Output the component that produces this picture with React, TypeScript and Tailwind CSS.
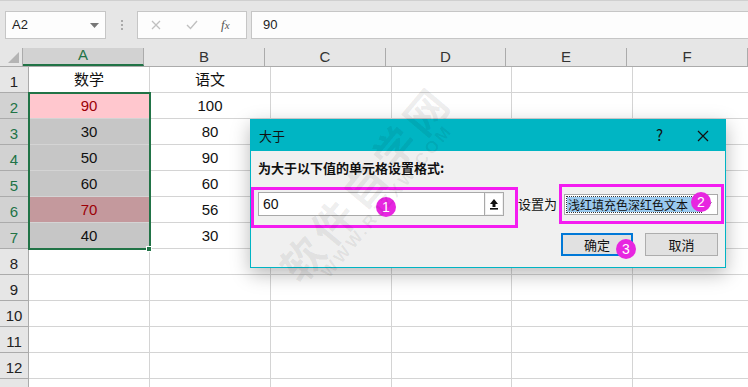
import React from 'react';

const cols = ['A', 'B', 'C', 'D', 'E', 'F'];
const colW = [121, 121, 121, 120, 121, 121];

type Cell = { v?: string; bg?: string; color?: string };

const data: Record<number, Cell[]> = {
  1: [{ v: '数学' }, { v: '语文' }],
  2: [{ v: '90', bg: '#ffc7ce', color: '#9c0006' }, { v: '100' }],
  3: [{ v: '30', bg: '#c6c6c6' }, { v: '80' }],
  4: [{ v: '50', bg: '#c6c6c6' }, { v: '90' }],
  5: [{ v: '60', bg: '#c6c6c6' }, { v: '60' }],
  6: [{ v: '70', bg: '#c4999d', color: '#9c0006' }, { v: '56' }],
  7: [{ v: '40', bg: '#c6c6c6' }, { v: '30' }],
};

const font = { fontFamily: '"Liberation Sans", "Noto Sans CJK SC", sans-serif' };

const Badge = ({ n, className }: { n: string; className: string }) => (
  <div
    className={`absolute w-[20px] h-[20px] rounded-full bg-[#e726e0] text-white text-[14px] leading-[20px] text-center ${className}`}
    style={font}
  >
    {n}
  </div>
);

const Toolbar = () => (
  <div className="h-[48px] bg-[#e6e6e6] border-t border-[#d0d0d0] flex items-start pt-[10px] pl-[5px]">
    <div className="w-[101px] h-[28px] bg-[#fdfdfd] border border-[#c6c6c6] flex items-center justify-between pl-[6px] pr-[6px]">
      <span className="text-[13px] text-[#222]">A2</span>
      <svg width="9" height="5" viewBox="0 0 9 5">
        <path d="M0 0h9L4.5 5z" fill="#777" />
      </svg>
    </div>
    <div className="w-[31px] h-[28px] flex flex-col items-center justify-center gap-[2px]">
      <span className="w-[2px] h-[2px] bg-[#aaa]" />
      <span className="w-[2px] h-[2px] bg-[#aaa]" />
      <span className="w-[2px] h-[2px] bg-[#aaa]" />
    </div>
    <div className="w-[110px] h-[28px] bg-[#fdfdfd] border border-[#c6c6c6] flex items-center">
      <svg className="ml-[13px]" width="10" height="10" viewBox="0 0 10 10">
        <path d="M1 1l8 8M9 1L1 9" stroke="#c0c0c0" strokeWidth="1.3" />
      </svg>
      <svg className="ml-[25px]" width="12" height="10" viewBox="0 0 12 10">
        <path d="M1 5l3.5 3.5L11 1" stroke="#c0c0c0" strokeWidth="1.4" fill="none" />
      </svg>
      <span className="ml-[23px] text-[13px] italic text-[#555]" style={{ fontFamily: '"Liberation Serif", serif' }}>
        f<span className="text-[11px]">x</span>
      </span>
    </div>
    <div className="ml-[4px] flex-1 h-[28px] bg-[#fdfdfd] border-y border-l border-[#c6c6c6] flex items-center pl-[11px]">
      <span className="text-[13px] text-[#222]">90</span>
    </div>
  </div>
);

const Sheet = () => {
  const rows = Array.from({ length: 13 }, (_, i) => i + 1);
  return (
    <div className="relative">
      <div className="flex h-[19px] bg-[#e6e6e6] border-b border-[#ababab]">
        <div className="w-[29px] border-r border-[#ababab] relative">
          <svg className="absolute right-[3px] bottom-[3px]" width="11" height="11" viewBox="0 0 11 11">
            <path d="M11 0v11H0z" fill="#b4b4b4" />
          </svg>
        </div>
        {cols.map((c, i) => (
          <div
            key={c}
            style={{ width: colW[i] }}
            className={`shrink-0 flex items-end justify-center text-[15px] leading-[18px] ${
              c === 'A'
                ? 'bg-[#d2d2d2] text-[#217346] border-b-2 border-[#217346] border-r border-r-[#ababab]'
                : 'text-[#333] border-r border-[#ababab]'
            }`}
          >
            {c}
          </div>
        ))}
      </div>
      {rows.map((r) => {
        const sel = r >= 2 && r <= 7;
        return (
          <div key={r} className="flex h-[26px]">
            <div
              className={`w-[29px] shrink-0 border-r border-b border-[#ababab] text-[15px] leading-[25px] text-center pt-[2px] ${
                sel ? 'bg-[#d2d2d2] text-[#217346]' : 'bg-[#e6e6e6] text-[#222]'
              }`}
            >
              {r}
            </div>
            {cols.map((c, i) => {
              const cell = data[r]?.[i];
              return (
                <div
                  key={c}
                  style={{ width: colW[i], background: cell?.bg, color: cell?.color ?? '#111' }}
                  className="shrink-0 border-r border-b border-[#d4d4d4] text-[15px] leading-[25px] text-center"
                >
                  {cell?.v}
                </div>
              );
            })}
          </div>
        );
      })}
      {/* selection A2:A7 */}
      <div className="absolute left-[28px] top-[44px] w-[123px] h-[158px] border-2 border-[#217346] pointer-events-none" />
      <div className="absolute left-[146px] top-[198px] w-[6px] h-[6px] bg-[#217346] border border-white" />
    </div>
  );
};

const Dialog = () => (
  <div
    className="absolute left-[250px] top-[119px] w-[476px] h-[149px] border border-[#00b4c4] bg-[#f0f0f0] shadow-[0_6px_18px_rgba(0,0,0,0.28)]"
    style={{ fontFamily: '"Noto Sans CJK SC", sans-serif' }}
  >
    <div className="h-[31px] bg-[#00b5c3] flex items-center pl-[8px] pr-[16px] text-[13px] text-[#111]">
      <span className="flex-1">大于</span>
      <span className="mr-[34px] text-[15px]">?</span>
      <svg width="12" height="12" viewBox="0 0 12 12">
        <path d="M1 1l10 10M11 1L1 11" stroke="#111" strokeWidth="1.2" />
      </svg>
    </div>
    <div className="relative px-[7px]">
      <div className="pt-[9px] text-[13px] font-bold text-[#111] leading-[16px]">为大于以下值的单元格设置格式:</div>
      <div className="mt-[16px] flex items-center h-[24px]">
        <div className="w-[227px] shrink-0 h-[24px] bg-white border border-[#a9a9a9] flex items-center pl-[4px] text-[14px] text-[#111]" style={font}>
          60
        </div>
        <div className="w-[19px] shrink-0 h-[24px] bg-[#f0f0f0] border border-l-0 border-[#a9a9a9] flex items-center justify-center">
          <div className="w-[16px] h-[20px] bg-white flex items-center justify-center">
            <svg width="10" height="12" viewBox="0 0 10 12">
              <path d="M5 1L1 6h2.5v3h3V6H9z" fill="#111" />
              <rect x="1" y="10" width="8" height="1.6" fill="#111" />
            </svg>
          </div>
        </div>
        <span className="ml-[14px] w-[46px] shrink-0 whitespace-nowrap text-[13px] text-[#111]">设置为</span>
        <div className="w-[154px] shrink-0 h-[21px] bg-white border border-[#a9a9a9] flex items-center p-[2px]">
          <div className="flex-1 h-full bg-[#99c9ef] outline-1 outline-dotted outline-[#333] text-[12px] leading-[15px] text-[#111] pl-[1px] whitespace-nowrap overflow-hidden">
            浅红填充色深红色文本
          </div>
          <div className="w-[14px] h-full flex items-center justify-center">
            <svg width="8" height="5" viewBox="0 0 8 5">
              <path d="M0.5 0.5L4 4l3.5-3.5" stroke="#555" fill="none" />
            </svg>
          </div>
        </div>
      </div>
      <div className="mt-[17px] flex justify-end gap-[12px]">
        <div className="w-[72px] h-[23px] bg-[#e1e1e1] border-2 border-[#0078d7] text-[13px] leading-[19px] text-center text-[#111]">
          确定
        </div>
        <div className="w-[73px] h-[23px] bg-[#e1e1e1] border border-[#adadad] text-[13px] leading-[21px] text-center text-[#111]">
          取消
        </div>
      </div>
    </div>
    {/* annotations */}
    <div className="absolute left-[0px] top-[67px] w-[267px] h-[41px] border-[3px] border-[#f41cf0]" />
    <Badge n="1" className="left-[125px] top-[77px]" />
    <div className="absolute left-[308px] top-[64px] w-[165px] h-[40px] border-[3px] border-[#f41cf0]" />
    <Badge n="2" className="left-[440px] top-[72px]" />
    <Badge n="3" className="left-[365px] top-[119px]" />
    {/* watermark */}
    <div className="absolute left-[0px] top-[38px] w-[240px] text-center -rotate-[50deg] pointer-events-none leading-none">
      <div className="text-[42px] font-bold text-black/[0.07] tracking-[6px]">软件自学网</div>
      <div className="text-[17px] font-bold text-black/[0.07] tracking-[3px]" style={font}>WWW.RJZXW.COM</div>
    </div>
  </div>
);

export default function App() {
  return (
    <div className="relative w-[748px] h-[387px] overflow-hidden bg-white" style={font}>
      <Toolbar />
      <Sheet />
      <Dialog />
    </div>
  );
}
